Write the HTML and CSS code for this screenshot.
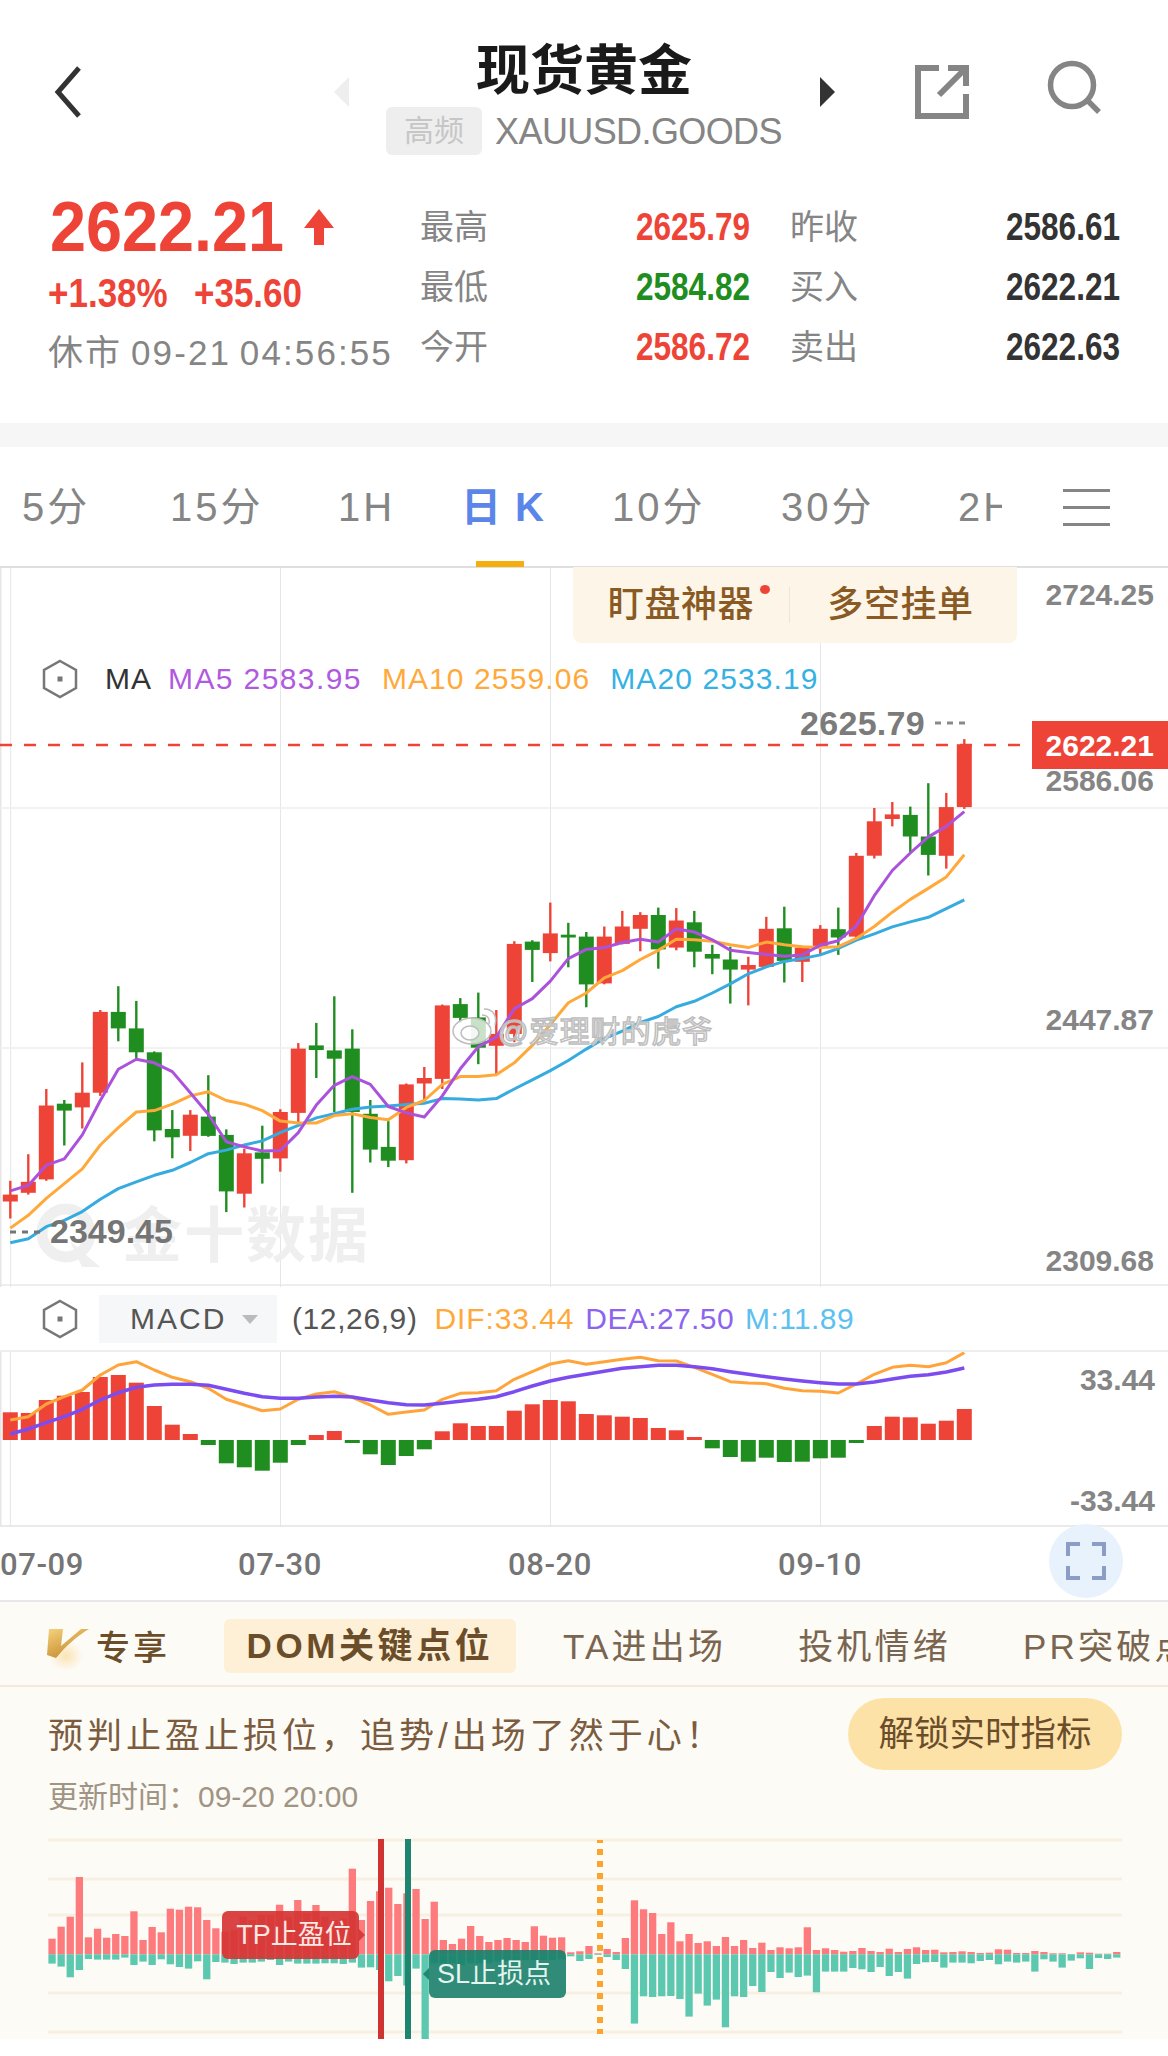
FILE: index.html
```html
<!DOCTYPE html>
<html lang="zh">
<head>
    <meta charset="UTF-8">
    <meta name="viewport" content="width=device-width, initial-scale=1.0">
    <title>现货黄金</title>
    <link rel="stylesheet" href="styles.css">
</head>
<body>
    <div class="page">
        <div class="header">
            <div class="header-left">
                <svg class="back-icon" width="28" height="52" viewBox="0 0 28 52"><path d="M25 2 L4 26 L25 50" fill="none" stroke="#333" stroke-width="5"/></svg>
                <span class="arrow-left"></span>
            </div>
            <div class="title-block">
                <h1>现货黄金</h1>
                <div class="sub-title">
                    <span class="freq-tag">高频</span>
                    <span class="symbol">XAUUSD.GOODS</span>
                </div>
            </div>
            <div class="header-right">
                <span class="arrow-right"></span>
                <svg class="share-icon" width="54" height="54" viewBox="0 0 54 54"><path d="M24 3 H3 V51 H51 V29 M33 3 H51 V21 M24 30 L48 6" fill="none" stroke="#858585" stroke-width="6"/></svg>
                <svg class="search-icon" width="56" height="56" viewBox="0 0 56 56"><circle cx="25" cy="25" r="21.5" fill="none" stroke="#858585" stroke-width="5.5"/><path d="M41 41 L52 52" stroke="#858585" stroke-width="5.5"/></svg>
            </div>
        </div>

        <div class="quote">
            <div class="price-row">
                <span class="last-price">2622.21</span>
                <svg class="up-arrow" width="30" height="36" viewBox="0 0 30 36"><path d="M15 0 L30 19 H20 V36 H10 V19 H0 Z" fill="#ee4438"/></svg>
            </div>
            <span class="stat-label">最高</span>
            <span class="stat-value red">2625.79</span>
            <span class="stat-label">昨收</span>
            <span class="stat-value dark">2586.61</span>

            <div class="change-row"><span class="change">+1.38%</span><span class="change">+35.60</span></div>
            <span class="stat-label">最低</span>
            <span class="stat-value green">2584.82</span>
            <span class="stat-label">买入</span>
            <span class="stat-value dark">2622.21</span>

            <div class="market-time">休市 09-21 04:56:55</div>
            <span class="stat-label">今开</span>
            <span class="stat-value red">2586.72</span>
            <span class="stat-label">卖出</span>
            <span class="stat-value dark">2622.63</span>
        </div>

        <div class="band"></div>

        <div class="period-bar">
            <div class="period-tabs">
                <span class="period-tab">5分</span>
                <span class="period-tab">15分</span>
                <span class="period-tab">1H</span>
                <span class="period-tab active">日 K</span>
                <span class="period-tab">10分</span>
                <span class="period-tab">30分</span>
                <span class="period-tab">2H</span>
            </div>
            <div class="menu-icon"><span></span><span></span><span></span></div>
        </div>

        <div class="chart-section">
            <div class="main-pane">
                <svg id="main-chart" class="chart-svg" width="1168" height="719" viewBox="0 567 1168 719"></svg>
                <div class="tool-box">
                    <span class="tool-item tool-dot">盯盘神器</span>
                    <span class="tool-item">多空挂单</span>
                </div>
                <div class="ma-legend">
                    <svg class="hex-icon" width="36" height="40" viewBox="0 0 36 40"><path d="M18 2 L34 11 V29 L18 38 L2 29 V11 Z" fill="none" stroke="#777" stroke-width="2.5"/><rect x="15.5" y="17.5" width="5" height="5" fill="#777"/></svg>
                    <span class="ma-name">MA</span>
                    <span class="ma5">MA5 2583.95</span>
                    <span class="ma10">MA10 2559.06</span>
                    <span class="ma20">MA20 2533.19</span>
                </div>
            </div>

            <div class="macd-head">
                <svg class="hex-icon" width="36" height="40" viewBox="0 0 36 40"><path d="M18 2 L34 11 V29 L18 38 L2 29 V11 Z" fill="none" stroke="#777" stroke-width="2.5"/><rect x="15.5" y="17.5" width="5" height="5" fill="#777"/></svg>
                <div class="macd-select">MACD<span class="caret"></span></div>
                <span class="macd-params">(12,26,9)</span>
                <span class="dif">DIF:33.44</span>
                <span class="dea">DEA:27.50</span>
                <span class="macd-m">M:11.89</span>
            </div>

            <div class="macd-pane">
                <svg id="macd-chart" class="chart-svg" width="1168" height="175" viewBox="0 1352 1168 175"></svg>
            </div>

            <div class="date-axis">
                <span class="date first">07-09</span>
                <span class="date">07-30</span>
                <span class="date">08-20</span>
                <span class="date">09-10</span>
                <div class="expand-btn">
                    <svg width="40" height="38" viewBox="0 0 40 38"><path d="M2 14 V2 H14 M26 2 H38 V14 M2 24 V36 H14 M26 36 H38 V24" fill="none" stroke="#8b9dc4" stroke-width="4"/></svg>
                </div>
            </div>
        </div>

        <div class="dom-section">
            <div class="dom-tabs">
                <svg class="vip-logo" width="44" height="44" viewBox="0 0 44 44">
                    <defs>
                        <linearGradient id="vip-gold" x1="0" y1="0" x2="0.6" y2="1"><stop offset="0" stop-color="#f5d27e"/><stop offset="1" stop-color="#c48a2c"/></linearGradient>
                        <radialGradient id="vip-glow"><stop offset="0" stop-color="#fbe3b4"/><stop offset="1" stop-color="#fdfbf6"/></radialGradient>
                    </defs>
                    <ellipse cx="20" cy="28" rx="17" ry="15" fill="url(#vip-glow)"/>
                    <path d="M3 1 H17 L15 18 L35 1 H43 C31 8 19 19 10 30 L1 27 Z" fill="url(#vip-gold)"/>
                </svg>
                <span class="vip-text">专享</span>
                <span class="dom-divider"></span>
                <span class="dom-pill">DOM关键点位</span>
                <span class="dom-tab">TA进出场</span>
                <span class="dom-tab">投机情绪</span>
                <span class="dom-tab">PR突破点</span>
            </div>
            <div class="dom-body">
                <div class="dom-intro">
                    <span class="dom-slogan">预判止盈止损位，追势/出场了然于心！</span>
                    <span class="unlock-btn">解锁实时指标</span>
                </div>
                <div class="dom-updated">更新时间：09-20 20:00</div>
                <svg id="dom-chart" class="chart-svg" width="1168" height="219" viewBox="0 1820 1168 219"></svg>
            </div>
        </div>
    </div>

    <script src="charts.js"></script>
</body>
</html>
```

FILE: styles.css
```css
:root {
    --red: #ee4438;
    --green: #208d20;
    --gray: #858585;
    --dark: #333333;
    --brown: #6b4d2a;
}

* {
    margin: 0;
    padding: 0;
    box-sizing: border-box;
}

body {
    font-family: "Liberation Sans", "Noto Sans CJK SC", sans-serif;
    background-color: #ffffff;
    color: var(--dark);
}

.page {
    width: 1168px;
    height: 2056px;
    overflow: hidden;
}

/* header */
.header {
    display: grid;
    grid-template-columns: 1fr 394px 1fr;
    padding-top: 44px;
}

.header-left,
.header-right {
    display: flex;
    align-items: center;
    height: 96px;
}

.header-left {
    padding-left: 54px;
    justify-content: space-between;
    padding-right: 38px;
}

.header-right {
    padding-left: 39px;
}

.arrow-left,
.arrow-right {
    width: 0;
    height: 0;
    border-top: 15px solid transparent;
    border-bottom: 15px solid transparent;
}

.arrow-left {
    border-right: 15px solid #eeeeee;
}

.arrow-right {
    border-left: 15px solid var(--dark);
}

.share-icon {
    margin-left: 80px;
}

.search-icon {
    margin-left: 78px;
    margin-top: -8px;
}

.title-block {
    display: flex;
    flex-direction: column;
    align-items: center;
}

.title-block h1 {
    font-size: 54px;
    line-height: 54px;
    font-weight: 700;
    color: #1a1a1a;
    margin-bottom: 9px;
}

.sub-title {
    display: flex;
    align-items: center;
    gap: 13px;
    height: 48px;
}

.freq-tag {
    width: 96px;
    height: 48px;
    line-height: 48px;
    text-align: center;
    font-size: 30px;
    color: #c6c6c6;
    background-color: #eeeeee;
    border-radius: 6px;
}

.symbol {
    font-size: 36px;
    color: var(--gray);
    letter-spacing: -0.6px;
    margin-top: 2px;
}

/* quote, the numbers are squeezed to look like the app's condensed font */
.quote {
    display: grid;
    grid-template-columns: 372px 216px 154px 216px 114px;
    grid-auto-rows: 60px;
    align-items: center;
    padding: 42px 48px 46px;
}

.price-row {
    display: flex;
    align-items: center;
    gap: 21px;
    margin-left: 2px;
}

.last-price {
    width: 233px;
    font-size: 70px;
    line-height: 60px;
    font-weight: 700;
    color: var(--red);
    transform: scaleX(0.925);
    transform-origin: left center;
}

.change-row {
    display: flex;
    margin-top: 12px;
}

.change {
    width: 146px;
    font-size: 40px;
    font-weight: 700;
    color: var(--red);
    transform: scaleX(0.875);
    transform-origin: left center;
}

.market-time {
    font-size: 35px;
    letter-spacing: 2.1px;
    word-spacing: -3px;
    color: var(--gray);
    white-space: nowrap;
    margin-top: 4px;
}

.stat-label {
    font-size: 34px;
    color: var(--gray);
    margin-bottom: 6px;
}

.stat-value {
    display: block;
    width: 114px;
    font-size: 38px;
    font-weight: 700;
    white-space: nowrap;
    transform: scaleX(0.83);
    transform-origin: left center;
}

.red { color: var(--red); }
.green { color: var(--green); }
.dark { color: var(--dark); }

.band {
    height: 24px;
    background-color: #f6f6f6;
}

/* period tabs */
.period-bar {
    display: flex;
    height: 120px;
}

.period-tabs {
    display: grid;
    grid-template-columns: 148px 168px 123px 151px 169px 177px 1fr;
    width: 1002px;
    padding-left: 22px;
    overflow: hidden;
}

.period-tab {
    position: relative;
    font-size: 40px;
    line-height: 120px;
    letter-spacing: 3px;
    color: var(--gray);
    white-space: pre;
}

.period-tab.active {
    color: #5b85e8;
    font-weight: 700;
    letter-spacing: 1.5px;
}

.period-tab.active::after {
    content: "";
    position: absolute;
    left: 15px;
    bottom: 0;
    width: 48px;
    height: 6px;
    background-color: #f6ad0f;
}

.menu-icon {
    display: flex;
    flex-direction: column;
    gap: 14px;
    width: 47px;
    margin: 42px 0 0 61px;
}

.menu-icon span {
    height: 3px;
    background-color: var(--gray);
}

/* chart */
.chart-section {
    border-top: 2px solid #dfdfdf;
    border-bottom: 2px solid #e8e8e8;
    margin-top: -1px;
}

.chart-svg {
    display: block;
}

.chart-svg text {
    font-family: "Liberation Sans", "Noto Sans CJK SC", sans-serif;
}

.main-pane {
    position: relative;
    height: 718px;
    border-bottom: 2px solid #eeeeee;
}

.tool-box {
    position: absolute;
    top: -1px;
    left: 573px;
    display: flex;
    width: 444px;
    height: 76px;
    padding: 20px 0;
    background-color: #fdf6e8;
    border-radius: 0 0 8px 8px;
}

.tool-item {
    position: relative;
    width: 217px;
    font-size: 36px;
    line-height: 36px;
    letter-spacing: 0.6px;
    font-weight: 500;
    text-align: center;
    color: #8a5a24;
}

.tool-item + .tool-item {
    padding-left: 4px;
}

.tool-dot {
    border-right: 1px solid #efe5d2;
}

.tool-dot::after {
    content: "";
    position: absolute;
    left: 187px;
    top: -2px;
    width: 10px;
    height: 9px;
    background-color: var(--red);
    border-radius: 50%;
}

.ma-legend {
    position: absolute;
    top: 91px;
    left: 42px;
    display: flex;
    align-items: center;
    font-size: 30px;
    letter-spacing: 1.1px;
    white-space: nowrap;
}

.ma-name {
    color: var(--dark);
    margin-left: 27px;
    margin-right: 16px;
    letter-spacing: 1px;
}

.ma5 { color: #b05ae0; letter-spacing: 1.4px; }
.ma10 { color: #ffa93a; margin-left: 20px; }
.ma20 { color: #35b1e3; margin-left: 20px; }

.macd-head {
    display: flex;
    align-items: center;
    height: 66px;
    padding: 2px 0 0 42px;
    font-size: 30px;
    letter-spacing: 0.9px;
    border-bottom: 2px solid #eeeeee;
    white-space: nowrap;
}

.macd-select {
    display: flex;
    align-items: center;
    width: 178px;
    height: 48px;
    margin: 0 15px 0 21px;
    padding-left: 31px;
    background-color: #f6f7f8;
    color: #555555;
    letter-spacing: 2px;
}

.caret {
    width: 0;
    height: 0;
    margin-left: 16px;
    border-left: 8px solid transparent;
    border-right: 8px solid transparent;
    border-top: 9px solid #bbbbbb;
}

.macd-params { color: #555555; margin-right: 17px; letter-spacing: 0.6px; }
.dif { color: #ffa93a; margin-right: 11px; }
.dea { color: #8d64f0; margin-right: 11px; letter-spacing: 0.4px; }
.macd-m { color: #5cc0f0; letter-spacing: 0.4px; }

.macd-pane {
    height: 175px;
    border-bottom: 2px solid #eaeaea;
}

.date-axis {
    display: flex;
    align-items: center;
    height: 73px;
    padding-top: 2px;
}

.date {
    width: 270px;
    text-align: center;
    font-family: Roboto, "Liberation Sans", sans-serif;
    font-size: 31px;
    font-weight: 500;
    letter-spacing: 0.6px;
    color: #757575;
}

.date.first {
    width: 145px;
    text-align: left;
}

.expand-btn {
    display: flex;
    align-items: center;
    justify-content: center;
    width: 74px;
    height: 74px;
    margin: -8px 0 0 94px;
    background-color: #e8f2fc;
    border-radius: 50%;
}

/* DOM panel */
.dom-section {
    background-color: #fdfbf6;
    height: 437px;
}

.dom-tabs {
    display: flex;
    align-items: center;
    height: 85px;
    padding: 4px 0 0 46px;
    border-bottom: 2px solid #f5e9df;
    overflow: hidden;
    white-space: nowrap;
}

.vip-logo {
    flex-shrink: 0;
    margin-top: 8px;
}

.vip-text {
    margin-left: 6px;
    font-size: 34px;
    font-weight: 500;
    letter-spacing: 3px;
    color: var(--brown);
}

.dom-divider {
    width: 2px;
    height: 54px;
    margin: 0 27px;
    background-color: #f1e8da;
}

.dom-pill {
    flex-shrink: 0;
    width: 292px;
    height: 54px;
    line-height: 54px;
    text-align: center;
    font-size: 35px;
    font-weight: 700;
    letter-spacing: 3.6px;
    color: var(--brown);
    background-color: #fdf0d6;
    border-radius: 6px;
}

.dom-tab {
    flex-shrink: 0;
    margin: 0 25px 4px 47px;
    font-size: 35px;
    letter-spacing: 3.2px;
    color: #7a6650;
}

.dom-body {
    padding: 0 46px 0 48px;
}

.dom-intro {
    display: flex;
    justify-content: space-between;
    align-items: center;
    height: 72px;
    margin-top: 11px;
}

.dom-slogan {
    font-size: 35px;
    letter-spacing: 4px;
    color: #7b5c3f;
    margin-bottom: 4px;
}

.unlock-btn {
    width: 274px;
    height: 72px;
    line-height: 72px;
    text-align: center;
    font-size: 35.5px;
    color: var(--brown);
    background-color: #fde2a8;
    border-radius: 36px;
}

.dom-updated {
    margin-top: 6px;
    height: 42px;
    line-height: 42px;
    font-size: 30px;
    color: #a09484;
}

#dom-chart {
    margin: 2px 0 0 -48px;
}
```

FILE: charts.js
```javascript
// Values below were read off in chart units, the y* helpers turn them into page pixels
const RED = '#ee4438';
const GREEN = '#208d20';
const candleX = i => 10.3 + i * 18;
const yMain = v => 560 + v / 2.178;
const yMacd = v => 1280 + v / 3;
const yDom = v => 1820 + v / 3;

// up, wick top, body top, body bottom, wick bottom
const candles = [
    [1, 1350, 1380, 1395, 1432], [1, 1292, 1352, 1376, 1380], [1, 1150, 1186, 1347, 1350],
    [0, 1174, 1182, 1197, 1273], [1, 1092, 1158, 1190, 1236], [1, 978, 982, 1158, 1165],
    [0, 926, 982, 1018, 1046], [0, 958, 1018, 1070, 1085], [0, 1068, 1070, 1240, 1264],
    [0, 1196, 1237, 1255, 1301], [1, 1196, 1206, 1252, 1285], [0, 1120, 1210, 1252, 1254],
    [0, 1238, 1250, 1373, 1418], [1, 1280, 1290, 1378, 1408], [0, 1230, 1288, 1302, 1356],
    [1, 1194, 1200, 1301, 1330], [1, 1050, 1062, 1202, 1222], [0, 1006, 1055, 1065, 1126],
    [0, 948, 1066, 1084, 1200], [0, 1020, 1062, 1200, 1376], [0, 1174, 1204, 1282, 1310],
    [0, 1220, 1276, 1306, 1320], [1, 1138, 1140, 1305, 1312], [1, 1102, 1126, 1138, 1174],
    [1, 966, 968, 1128, 1150], [0, 952, 965, 995, 1005], [0, 940, 994, 1060, 1096],
    [1, 978, 1030, 1056, 1118], [1, 828, 834, 1030, 1048], [0, 826, 829, 847, 917],
    [1, 744, 811, 854, 872], [0, 788, 814, 820, 885], [0, 808, 818, 922, 972],
    [1, 796, 818, 920, 922], [1, 762, 796, 834, 835], [1, 765, 771, 801, 850],
    [0, 755, 771, 846, 888], [1, 756, 783, 842, 848], [0, 762, 787, 851, 885],
    [0, 836, 856, 866, 900], [0, 840, 868, 890, 964], [1, 862, 880, 890, 968],
    [1, 775, 801, 884, 885], [0, 753, 800, 871, 918], [1, 838, 842, 873, 917],
    [1, 793, 801, 842, 860], [0, 755, 802, 820, 858], [1, 636, 642, 818, 822],
    [1, 538, 567, 642, 648], [1, 525, 552, 562, 578], [0, 535, 553, 600, 635],
    [0, 484, 600, 640, 685], [1, 505, 536, 642, 670], [1, 388, 399, 536, 540]
];

const ma5 = [1372, 1360, 1316, 1302, 1250, 1175, 1107, 1085, 1093, 1112, 1158, 1205, 1265, 1276, 1285, 1284, 1245, 1185, 1142, 1123, 1140, 1188, 1202, 1211, 1165, 1106, 1058, 1037, 975, 953, 915, 866, 846, 842, 831, 824, 830, 801, 808, 825, 848, 853, 857, 861, 858, 837, 827, 795, 729, 674, 636, 601, 578, 546];
const ma10 = [1453, 1425, 1388, 1356, 1324, 1272, 1234, 1200, 1197, 1183, 1165, 1156, 1175, 1183, 1197, 1220, 1224, 1224, 1208, 1204, 1212, 1217, 1190, 1175, 1140, 1123, 1123, 1119, 1093, 1055, 1010, 962, 941, 908, 892, 868, 848, 824, 825, 828, 836, 842, 830, 836, 840, 842, 840, 822, 796, 765, 737, 713, 688, 640];
const ma20 = [1485, 1476, 1450, 1436, 1417, 1390, 1367, 1352, 1338, 1327, 1310, 1291, 1283, 1272, 1263, 1245, 1229, 1213, 1204, 1194, 1189, 1187, 1184, 1181, 1171, 1172, 1174, 1171, 1150, 1130, 1110, 1088, 1063, 1040, 1024, 1005, 992, 971, 959, 941, 921, 899, 884, 872, 866, 858, 844, 826, 812, 797, 786, 776, 757, 738];

const macdBars = [397, 399, 360, 347, 336, 291, 285, 308, 378, 434, 462, 495, 550, 562, 572, 548, 495, 465, 453, 489, 523, 555, 528, 508, 454, 430, 438, 438, 392, 373, 360, 364, 402, 406, 410, 414, 444, 451, 471, 505, 531, 545, 533, 546, 545, 535, 533, 489, 438, 410, 412, 431, 422, 387];
const dif = [420, 410, 372, 350, 330, 285, 255, 245, 270, 292, 305, 325, 358, 375, 392, 387, 358, 342, 335, 352, 375, 403, 396, 390, 358, 340, 338, 332, 298, 275, 252, 242, 253, 245, 238, 232, 242, 243, 262, 283, 305, 309, 311, 325, 332, 334, 339, 312, 283, 262, 256, 260, 248, 218];
const dea = [462, 447, 428, 410, 388, 360, 338, 322, 315, 313, 313, 316, 328, 340, 350, 355, 355, 351, 349, 351, 360, 368, 374, 375, 370, 364, 358, 350, 335, 318, 303, 292, 283, 274, 265, 260, 256, 256, 260, 266, 275, 283, 290, 297, 303, 308, 312, 312, 306, 297, 289, 284, 276, 264];

// top of the red part, bottom of the teal part
const domBars = [
    [356, 431], [320, 440], [290, 472], [171, 450], [352, 417], [326, 419], [353, 419], [342, 419], [348, 413], [274, 435],
    [360, 425], [321, 435], [337, 418], [266, 433], [269, 441], [260, 446], [262, 424], [300, 478], [325, 426], [335, 428],
    [330, 432], [290, 428], [300, 428], [285, 425], [285, 420], [254, 435], [290, 425], [240, 431], [280, 431], [255, 431],
    [290, 430], [300, 430], [295, 432], [146, 428], [300, 443], [243, 442], [214, 450], [203, 484], [252, 468], [220, 497],
    [207, 446], [297, 660], [245, 430], [360, 430], [372, 430], [356, 436], [318, 430], [348, 430], [366, 430], [360, 425],
    [354, 425], [360, 425], [366, 420], [319, 420], [347, 420], [353, 420], [352, 418], [397, 409], [394, 423], [378, 417],
    [400, 405], [387, 411], [396, 420], [354, 447], [241, 611], [268, 529], [279, 531], [342, 529], [307, 528], [364, 537],
    [342, 590], [369, 521], [364, 557], [378, 539], [351, 622], [378, 529], [360, 531], [384, 498], [368, 516], [390, 456],
    [382, 474], [385, 458], [382, 471], [322, 467], [390, 517], [385, 455], [390, 455], [395, 455], [393, 444], [384, 448],
    [393, 456], [396, 441], [386, 468], [396, 456], [387, 476], [382, 432], [390, 427], [389, 426], [397, 443], [396, 428],
    [394, 428], [396, 430], [399, 423], [398, 420], [388, 433], [389, 425], [399, 428], [399, 425], [393, 455], [396, 418],
    [400, 425], [400, 443], [402, 422], [397, 415], [398, 447], [401, 414], [401, 417], [396, 413]
];

function polyline(values, toY, color, width) {
    const points = values.map((v, i) => `${candleX(i)},${toY(v).toFixed(1)}`).join(' ');
    return `<polyline points="${points}" fill="none" stroke="${color}" stroke-width="${width}" stroke-linejoin="round"/>`;
}

function hLine(y, x1, x2, color, width) {
    return `<line x1="${x1}" x2="${x2}" y1="${y}" y2="${y}" stroke="${color}" stroke-width="${width}"/>`;
}

function vLine(x, y1, y2, color, width) {
    return `<line x1="${x}" x2="${x}" y1="${y1}" y2="${y2}" stroke="${color}" stroke-width="${width}"/>`;
}

function axisLabel(text, x, y, size) {
    return `<text x="${x}" y="${y}" text-anchor="end" font-size="${size}" font-weight="700" fill="#858585" dominant-baseline="central">${text}</text>`;
}

function drawMain() {
    let html = '';

    // grid
    [10.7, 280.5, 550.5, 820.5].forEach(x => { html += vLine(x, 567, 1286, '#e6e6e6', 1); });
    html += vLine(0.5, 567, 1286, '#e6e6e6', 2);
    [807, 1047].forEach(y => { html += hLine(y, 0, 1168, '#eeeeee', 1.5); });

    // jin10 watermark
    html += `<circle cx="66" cy="1232" r="24" fill="none" stroke="#efefef" stroke-width="11"/>`;
    html += `<path d="M70 1240 L100 1266 L82 1266 Z" fill="#efefef"/>`;
    html += `<text x="122" y="1256" font-size="60" font-weight="700" fill="#efefef" letter-spacing="2">金十数据</text>`;

    candles.forEach(([up, wickTop, top, bottom, wickBottom], i) => {
        const color = up ? RED : GREEN;
        const x = candleX(i);
        html += vLine(x, yMain(wickTop).toFixed(1), yMain(wickBottom).toFixed(1), color, 2.4);
        html += `<rect x="${x - 7.5}" y="${yMain(top).toFixed(1)}" width="15" height="${Math.max((bottom - top) / 2.178, 2).toFixed(1)}" fill="${color}"/>`;
    });

    html += polyline(ma20, yMain, '#35abe0', 3);
    html += polyline(ma10, yMain, '#ffa93a', 3);
    html += polyline(ma5, yMain, '#ab52dc', 3);

    // last price
    html += `<line x1="0" x2="1030" y1="744" y2="744" stroke="${RED}" stroke-width="2.4" stroke-dasharray="12 12"/>`;

    // high / low marks
    html += `<text x="800" y="722" font-size="34" font-weight="700" fill="#7b7b7b" letter-spacing="0.3" dominant-baseline="central">2625.79</text>`;
    html += `<line x1="935" x2="965" y1="722" y2="722" stroke="#8a8a8a" stroke-width="3" stroke-dasharray="6 6"/>`;
    html += `<text x="50" y="1230" font-size="34" font-weight="700" fill="#757575" dominant-baseline="central">2349.45</text>`;
    html += `<line x1="10" x2="40" y1="1231" y2="1231" stroke="#757575" stroke-width="3" stroke-dasharray="6 6"/>`;

    html += axisLabel('2724.25', 1154, 593, 30);
    html += axisLabel('2586.06', 1154, 779, 30);
    html += axisLabel('2447.87', 1154, 1018, 30);
    html += axisLabel('2309.68', 1154, 1259, 30);

    html += `<rect x="1032" y="720" width="136" height="48" fill="${RED}"/>`;
    html += `<text x="1154" y="744" text-anchor="end" font-size="30" font-weight="700" fill="#ffffff" dominant-baseline="central">2622.21</text>`;

    // weibo watermark
    html += `<g fill="rgba(255,255,255,0.75)" stroke="#bdbdbd" stroke-width="1.5">
        <ellipse cx="472" cy="1030" rx="19" ry="13"/>
        <ellipse cx="470" cy="1032" rx="9" ry="7"/>
        <path d="M484 1008 C494 1008 497 1016 495 1024 M482 1014 C488 1014 490 1018 489 1023" fill="none"/>
        <text x="498" y="1041" font-size="30" letter-spacing="0.6">@爱理财的虎爷</text>
    </g>`;

    document.getElementById('main-chart').innerHTML = html;
}

function drawMacd() {
    let html = '';
    [10.4, 280.5, 550.5, 820.5].forEach(x => { html += vLine(x, 1352, 1527, '#e6e6e6', 1); });
    html += vLine(0.5, 1352, 1527, '#e6e6e6', 2);

    macdBars.forEach((v, i) => {
        const up = v < 480;
        const y = yMacd(Math.min(v, 480));
        const h = Math.abs(v - 480) / 3;
        html += `<rect x="${candleX(i) - 7.5}" y="${y.toFixed(1)}" width="15" height="${h.toFixed(1)}" fill="${up ? RED : GREEN}"/>`;
    });

    html += polyline(dif, yMacd, '#ffa43b', 3);
    html += polyline(dea, yMacd, '#7b4cf0', 3.5);

    html += axisLabel('33.44', 1155, 1379, 30);
    html += axisLabel('-33.44', 1155, 1500, 30);

    document.getElementById('macd-chart').innerHTML = html;
}

function drawDom() {
    let html = '';
    [1840, 1879, 1915, 1993, 2032].forEach(y => { html += hLine(y, 48, 1122, '#f8efe3', 3); });

    domBars.forEach(([top, bottom], i) => {
        const x = 48.4 + i * 9.1;
        html += `<rect x="${x.toFixed(1)}" y="${yDom(top).toFixed(1)}" width="7.3" height="${((403 - top) / 3).toFixed(1)}" fill="#fd7a7d"/>`;
        html += `<rect x="${x.toFixed(1)}" y="${yDom(403).toFixed(1)}" width="7.3" height="${((bottom - 403) / 3).toFixed(1)}" fill="#5cc8b0"/>`;
    });

    html += vLine(381, 1839, 2039, '#cf3432', 6);
    html += vLine(408, 1839, 2039, '#1d8570', 6);
    html += `<line x1="600" x2="600" y1="1840" y2="2034" stroke="#fda42c" stroke-width="6" stroke-dasharray="6 6" stroke-dashoffset="3"/>`;

    // stop loss / take profit tags
    html += `<path d="M359 1929 L365 1935 L359 1941 Z" fill="#d63434" opacity="0.92"/>`;
    html += `<rect x="222" y="1911" width="137" height="48" rx="6" fill="#d63434" opacity="0.92"/>`;
    html += `<text x="294" y="1935" text-anchor="middle" font-size="27" fill="#fde8e4" dominant-baseline="central">TP止盈位</text>`;
    html += `<path d="M429 1968 L423 1974 L429 1980 Z" fill="#19806a" opacity="0.9"/>`;
    html += `<rect x="429" y="1950" width="137" height="48" rx="6" fill="#19806a" opacity="0.9"/>`;
    html += `<text x="494" y="1974" text-anchor="middle" font-size="27" fill="#e4f5ef" dominant-baseline="central">SL止损点</text>`;

    document.getElementById('dom-chart').innerHTML = html;
}

drawMain();
drawMacd();
drawDom();
```
